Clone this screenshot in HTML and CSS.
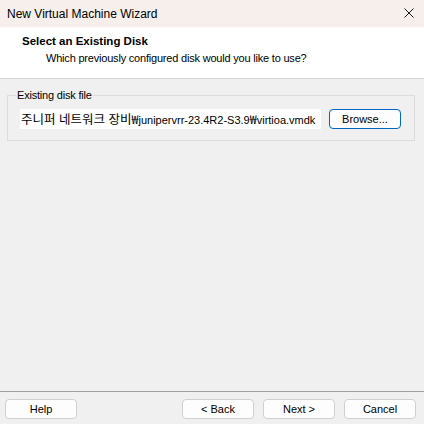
FILE: index.html
```html
<!DOCTYPE html>
<html lang="ko">
<head>
<meta charset="utf-8">
<title>New Virtual Machine Wizard</title>
<link rel="stylesheet" href="styles.css">
</head>
<body>
<div class="window">
  <div class="titlebar">
    <span class="title">New Virtual Machine Wizard</span>
    <span class="close">
      <svg width="10" height="10" viewBox="0 0 10 10"><path d="M0.5 0.5 L9.5 9.5 M9.5 0.5 L0.5 9.5" stroke="#1a1a1a" stroke-width="1" fill="none"/></svg>
    </span>
  </div>
  <div class="header">
    <div class="h-title">Select an Existing Disk</div>
    <div class="h-sub">Which previously configured disk would you like to use?</div>
  </div>
  <div class="content">
    <fieldset class="group">
      <legend>Existing disk file</legend>
      <div class="row">
        <div class="path"><span class="ko">주니퍼 네트워크 장비₩</span>junipervrr-23.4R2-S3.9<span class="ko">₩</span>virtioa.vmdk</div>
        <button class="btn focus">Browse...</button>
      </div>
    </fieldset>
  </div>
  <div class="footer">
    <button class="btn">Help</button>
    <div class="spacer"></div>
    <button class="btn">&lt; Back</button>
    <button class="btn">Next &gt;</button>
    <button class="btn">Cancel</button>
  </div>
</div>
</body>
</html>
```
FILE: styles.css
```css
* { box-sizing: border-box; }
html, body { margin: 0; padding: 0; }
body {
  width: 424px;
  height: 424px;
  background: #f0f0f0;
  font-family: "Liberation Sans", "Noto Sans CJK KR", sans-serif;
  font-size: 11px;
  letter-spacing: -0.2px;
  color: #000;
}
.window {
  width: 424px;
  height: 424px;
  display: flex;
  flex-direction: column;
}
.titlebar {
  height: 27px;
  background: #f6efeb;
  display: flex;
  align-items: center;
  padding: 0 10px 0 7px;
  font-size: 12px;
  letter-spacing: 0;
}
.title { flex: 1; line-height: 16px; }
.close { display: flex; width: 10px; height: 10px; margin-top: -2px; }
.header {
  height: 52px;
  background: #fff;
  border-bottom: 1px solid #d4d4d4;
  padding: 6px 0 0 22px;
}
.h-title { font-weight: bold; font-size: 11.5px; line-height: 16px; letter-spacing: 0; }
.h-sub { line-height: 16px; padding-left: 24px; margin-top: 1px; }
.content { flex: 1; }
.group {
  margin: 8px 9px 0 7px;
  padding: 6px 12px 11px 12px;
  border: 1px solid #dcdcdc;
  min-width: 0;
}
.group legend {
  padding: 0 1px;
  margin-left: -4px;
  line-height: 16px;
}
.row { display: flex; align-items: center; gap: 8px; }
.path {
  width: 301px;
  height: 20px;
  background: #fff;
  line-height: 20px;
  padding-left: 1px;
  white-space: nowrap;
  overflow: hidden;
  font-size: 11px;
  letter-spacing: 0;
}
.path .ko {
  font-family: "Noto Sans CJK KR", sans-serif;
  font-size: 12.5px;
  line-height: 20px;
}
.btn {
  width: 72px;
  height: 20px;
  padding: 0;
  font: inherit;
  letter-spacing: 0;
  color: #000;
  background: #fdfdfd;
  border: 1px solid #d0d0d0;
  border-radius: 4px;
  line-height: 18px;
}
.btn.focus { border-color: #0067c0; }
.footer {
  height: 33px;
  border-top: 1px solid #a0a0a0;
  display: flex;
  align-items: flex-start;
  padding: 7px 8px 0 5px;
  gap: 9px;
}
.spacer { flex: 1; }
```
